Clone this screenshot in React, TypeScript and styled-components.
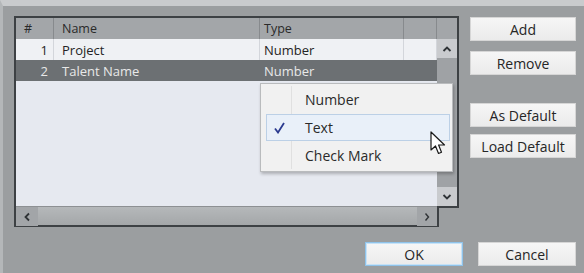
import React from "react";
import styled, { createGlobalStyle } from "styled-components";

const Global = createGlobalStyle`
  html, body { margin: 0; padding: 0; background: #9b9ea0; }
  body { font-family: "Open Sans", "Noto Sans", sans-serif; }
  * { box-sizing: border-box; }
`;

const Window = styled.div`
  width: 584px;
  height: 273px;
  background: #9b9ea0;
  border-top: 6px solid #c9cbcd;
  border-left: 3px solid #b4b7b9;
  padding: 10px 8px 0 11px;
  display: flex;
  flex-direction: column;
  overflow: hidden;
  position: relative;
  color: #262626;
`;

const Main = styled.div`
  display: flex;
  gap: 11px;
`;

const Frame = styled.div`
  width: 445px;
  height: 211px;
  border: 2px solid #3d4144;
  display: grid;
  grid-template-columns: 421px 20px;
  grid-template-rows: 21px 1fr 19px;
  position: relative;
`;

const Header = styled.div`
  grid-column: 1 / 3;
  display: flex;
  background: #a3a6a9;
  font-size: 12.5px;
  color: #2a2a2a;
`;

const HeadCell = styled.div<{ $w: number }>`
  width: ${(p) => p.$w}px;
  flex: none;
  border-right: 1px solid #878a8d;
  padding-left: 8px;
  display: flex;
  align-items: center;
  &:last-child { border-right: none; }
`;

const Body = styled.div`
  background: #e6e9f0;
  display: flex;
  flex-direction: column;
`;

const Row = styled.div<{ $sel?: boolean }>`
  display: flex;
  height: 21px;
  background: ${(p) => (p.$sel ? "#6c7073" : "#eff1f4")};
  color: ${(p) => (p.$sel ? "#e8e8e8" : "#242424")};
  font-size: 13px;
`;

const Cell = styled.div<{ $w: number; $right?: boolean; $sel?: boolean }>`
  width: ${(p) => p.$w}px;
  flex: none;
  display: flex;
  align-items: center;
  justify-content: ${(p) => (p.$right ? "flex-end" : "flex-start")};
  padding: ${(p) => (p.$right ? "0 5px 0 0" : "0 0 0 8px")};
  border-right: 1px solid ${(p) => (p.$sel ? "#6c7073" : "#d3d6db")};
`;

const VScroll = styled.div`
  background: #9fa2a5;
  display: flex;
  flex-direction: column;
  justify-content: space-between;
`;

const ScrollBtn = styled.div<{ $w?: number; $light?: boolean }>`
  width: ${(p) => (p.$w ? `${p.$w}px` : "100%")};
  height: 19px;
  background: ${(p) => (p.$light ? "#c9cbce" : "#a2a5a8")};
  display: flex;
  align-items: center;
  justify-content: center;
  flex: none;
  color: #2f3336;
`;

const HScroll = styled.div`
  background: linear-gradient(#b5b8ba, #a4a7a9);
  border-top: 1px solid #8d9093;
  display: flex;
  justify-content: space-between;
`;

const Corner = styled.div`
  background: #9b9ea0;
  border-left: 2px solid #3d4144;
  border-top: 2px solid #3d4144;
  margin: 0 -2px -2px 0;
`;

const Menu = styled.div`
  position: absolute;
  left: 244px;
  top: 65px;
  width: 193px;
  height: 89px;
  background: #f1f1f1;
  border: 1px solid #b9bbbd;
  box-shadow: 1px 2px 3px rgba(0, 0, 0, 0.25);
  padding: 2px 2px 2px 5px;
  display: flex;
  flex-direction: column;
  font-size: 14px;
  color: #2a2a2a;
  &::before {
    content: "";
    position: absolute;
    left: 30px;
    top: 2px;
    bottom: 2px;
    width: 1px;
    background: #e0e0e0;
  }
`;

const MenuItem = styled.div<{ $hl?: boolean }>`
  height: 28px;
  display: flex;
  align-items: center;
  border: 1px solid ${(p) => (p.$hl ? "#bcd0e6" : "transparent")};
  background: ${(p) => (p.$hl ? "#e9f0f9" : "transparent")};
  position: relative;
`;

const CheckBox = styled.div`
  width: 25px;
  height: 100%;
  display: flex;
  align-items: center;
  justify-content: center;
  flex: none;
  margin-right: 13px;
`;

const Cursor = styled.svg`
  position: absolute;
  left: 414px;
  top: 113px;
`;

const Side = styled.div`
  width: 108px;
  display: flex;
  flex-direction: column;
  padding-top: 1px;
`;

const Btn = styled.div<{ $mt?: number; $w?: number; $focus?: boolean }>`
  width: ${(p) => (p.$w ? `${p.$w}px` : "100%")};
  height: 24px;
  margin-top: ${(p) => p.$mt ?? 0}px;
  background: linear-gradient(#f6f6f6, #ebebeb);
  border: 1px solid ${(p) => (p.$focus ? "#8fc3ea" : "#d6d6d6")};
  box-shadow: ${(p) => (p.$focus ? "inset 0 0 0 1px #c7e2f6" : "none")};
  display: flex;
  align-items: center;
  justify-content: center;
  font-size: 14px;
  color: #262626;
  flex: none;
`;

const Footer = styled.div`
  display: flex;
  justify-content: flex-end;
  gap: 15px;
  margin-top: 15px;
`;

const Chev = ({ d }: { d: string }) => (
  <svg width="10" height="8" viewBox="0 0 10 8">
    <path d={d} fill="none" stroke="#2f3336" strokeWidth="1.8" />
  </svg>
);

export default function App() {
  return (
    <>
      <Global />
      <Window>
        <Main>
          <Frame>
            <Header>
              <HeadCell $w={38}>#</HeadCell>
              <HeadCell $w={206}>Name</HeadCell>
              <HeadCell $w={144} style={{ paddingLeft: 4 }}>Type</HeadCell>
              <HeadCell $w={33} />
              <HeadCell $w={20} />
            </Header>
            <Body>
              <Row>
                <Cell $w={38} $right>1</Cell>
                <Cell $w={206}>Project</Cell>
                <Cell $w={144} style={{ paddingLeft: 4 }}>Number</Cell>
                <Cell $w={33} />
              </Row>
              <Row $sel>
                <Cell $w={38} $right $sel>2</Cell>
                <Cell $w={206} $sel>Talent Name</Cell>
                <Cell $w={144} $sel style={{ paddingLeft: 4 }}>Number</Cell>
                <Cell $w={33} $sel />
              </Row>
            </Body>
            <VScroll>
              <ScrollBtn $light>
                <Chev d="M1.5 6 L5 2.5 L8.5 6" />
              </ScrollBtn>
              <ScrollBtn $light>
                <Chev d="M1.5 2 L5 5.5 L8.5 2" />
              </ScrollBtn>
            </VScroll>
            <HScroll>
              <ScrollBtn $w={22}>
                <svg width="8" height="10" viewBox="0 0 8 10">
                  <path d="M6 1.5 L2.5 5 L6 8.5" fill="none" stroke="#2f3336" strokeWidth="1.8" />
                </svg>
              </ScrollBtn>
              <ScrollBtn $w={20}>
                <svg width="8" height="10" viewBox="0 0 8 10">
                  <path d="M2.5 1.5 L5.5 5 L2.5 8.5" fill="none" stroke="#2f3336" strokeWidth="1.4" />
                </svg>
              </ScrollBtn>
            </HScroll>
            <Corner />
            <Menu>
              <MenuItem>
                <CheckBox />
                Number
              </MenuItem>
              <MenuItem $hl>
                <CheckBox>
                  <svg width="11" height="12" viewBox="0 0 11 12">
                    <path d="M1 6.5 L4 10.5 L10 1" fill="none" stroke="#2b3a8f" strokeWidth="1.8" />
                  </svg>
                </CheckBox>
                Text
              </MenuItem>
              <MenuItem>
                <CheckBox />
                Check Mark
              </MenuItem>
            </Menu>
            <Cursor width="18" height="26" viewBox="0 0 18 26">
              <path
                d="M1 1 L1 19 L5.5 15 L8.5 22.5 L11.5 21.2 L8.6 14 L14.5 14 Z"
                fill="#ffffff"
                stroke="#1a1a1a"
                strokeWidth="1.2"
                strokeLinejoin="round"
              />
            </Cursor>
          </Frame>
          <Side>
            <Btn>Add</Btn>
            <Btn $mt={10}>Remove</Btn>
            <Btn $mt={28}>As Default</Btn>
            <Btn $mt={7}>Load Default</Btn>
          </Side>
        </Main>
        <Footer>
          <Btn $w={98} $focus>OK</Btn>
          <Btn $w={98}>Cancel</Btn>
        </Footer>
      </Window>
    </>
  );
}
